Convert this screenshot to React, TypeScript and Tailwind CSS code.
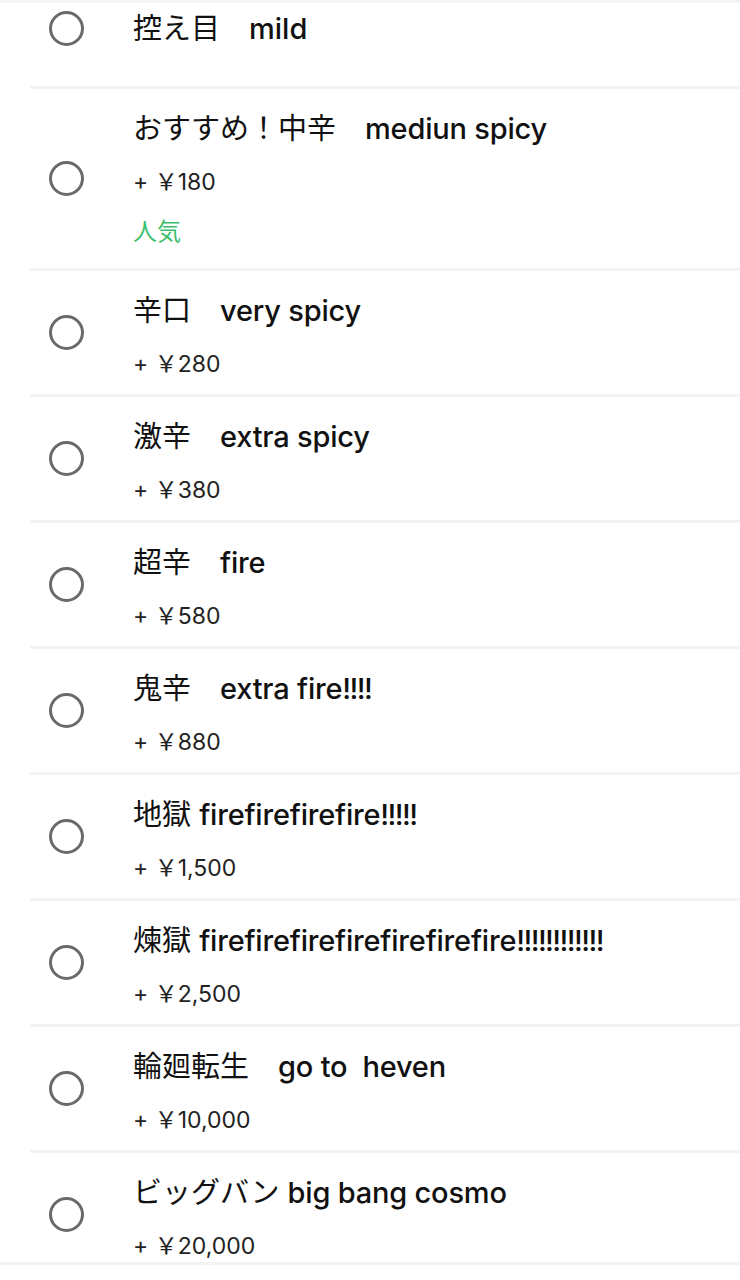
const options = [
  { jp: "おすすめ！中辛　", en: "mediun spicy", price: "+ ￥180", tag: "人気" },
  { jp: "辛口　", en: "very spicy", price: "+ ￥280" },
  { jp: "激辛　", en: "extra spicy", price: "+ ￥380" },
  { jp: "超辛　", en: "fire", price: "+ ￥580" },
  { jp: "鬼辛　", en: "extra fire", bang: "!!!!", price: "+ ￥880" },
  { jp: "地獄 ", en: "firefirefirefire", bang: "!!!!!", price: "+ ￥1,500" },
  { jp: "煉獄 ", en: "firefirefirefirefirefirefire", bang: "!!!!!!!!!!!!", price: "+ ￥2,500" },
  { jp: "輪廻転生　", en: "go to  heven", price: "+ ￥10,000" },
  { jp: "ビッグバン ", en: "big bang cosmo", price: "+ ￥20,000" },
]

function Radio() {
  return <div className="ml-[19px] mr-[49px] h-[35px] w-[35px] shrink-0 rounded-full border-[3px] border-[#6a6a6a]" />
}

export default function App() {
  return (
    <div
      className="relative h-[1280px] w-[740px] overflow-hidden bg-white text-[#111]"
      style={{ fontFamily: 'Inter, "Noto Sans CJK JP", sans-serif' }}
    >
      <div className="h-[3px] bg-[#f4f4f4]" />

      {/* first row, top cut off */}
      <div className="ml-[30px] flex items-start border-b-[3px] border-[#f3f3f3] pb-[32px]">
        <div className="mt-[8px]">
          <Radio />
        </div>
        <div className="whitespace-pre text-[29px] leading-[51px]">
          控え目　<span className="font-medium">mild</span>
        </div>
      </div>

      {options.map((opt) => (
        <div key={opt.jp} className="ml-[30px] flex items-center border-b-[3px] border-[#f3f3f3]">
          <Radio />
          <div className={`flex flex-col pt-[14px] ${opt.tag ? "pb-[11px]" : "pb-[4px]"}`}>
            <div className="whitespace-pre text-[29px] leading-[51px]">
              {opt.jp}
              <span className="font-medium tracking-[-0.2px]">{opt.en}</span>
              {opt.bang && <span className="font-medium tracking-[-1.6px]">{opt.bang}</span>}
            </div>
            <div className="mt-[3px] whitespace-pre text-[23px] leading-[51px] text-[#222]">{opt.price}</div>
            {opt.tag && <div className="-mt-[2px] text-[24px] leading-[51px] text-[#3bbf6e]">{opt.tag}</div>}
          </div>
        </div>
      ))}

      {/* bottom bar edge */}
      <div className="absolute inset-x-0 top-[1262px] bottom-0 border-t-[3px] border-[#f3f3f3] bg-white" />
    </div>
  )
}
